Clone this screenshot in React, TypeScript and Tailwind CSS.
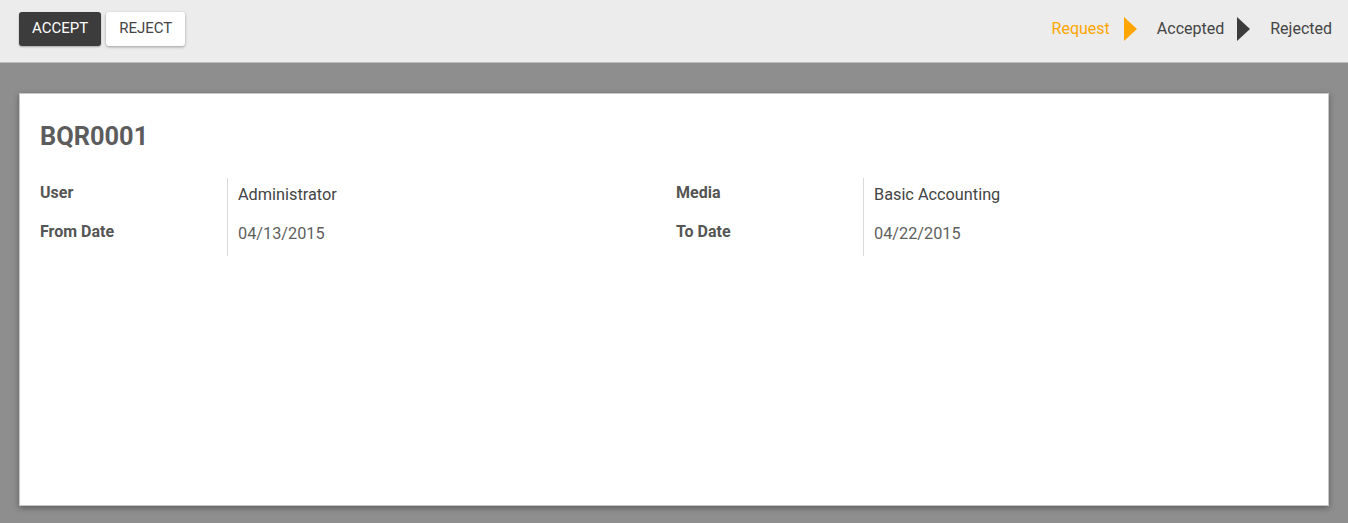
import React from 'react';

const Field = ({ label, value, muted }: { label: string; value: string; muted?: boolean }) => (
  <div className="flex">
    <div className="w-[188px] shrink-0 border-r border-[#d9d9d9] pt-[3px] h-[39px] text-[16px] font-bold text-[#555555]">
      {label}
    </div>
    <div className={`pl-[10px] pt-[5px] h-[39px] text-[16.3px] ${muted ? 'text-[#5f5f5f]' : 'text-[#444444]'}`}>
      {value}
    </div>
  </div>
);

export default function App() {
  return (
    <div className="min-h-[523px] bg-[#8e8e8e] flex flex-col" style={{ fontFamily: 'Roboto, "Noto Sans", sans-serif' }}>
      {/* Control panel */}
      <div className="h-[63px] bg-[#ececec] border-b border-[#bdbdbd] flex items-center justify-between pl-[19px] pr-[16px]">
        <div className="flex gap-[5px] -mt-[5px]">
          <button className="h-[34px] px-[13px] bg-[#3c3c3c] text-white text-[15px] rounded-[3px] shadow-[0_1px_2px_rgba(0,0,0,0.3)]">
            ACCEPT
          </button>
          <button className="h-[34px] px-[13px] bg-white text-[#444] text-[15px] rounded-[3px] shadow-[0_1px_3px_rgba(0,0,0,0.35)]">
            REJECT
          </button>
        </div>
        <div className="flex items-center text-[16px] -mt-[4px]">
          <span className="text-[#ffa500]">Request</span>
          <span className="ml-[14px] mr-[20px] w-0 h-0 border-y-[12px] border-y-transparent border-l-[13px] border-l-[#ffa500]" />
          <span className="text-[#444]">Accepted</span>
          <span className="ml-[13px] mr-[20px] w-0 h-0 border-y-[12px] border-y-transparent border-l-[13px] border-l-[#3c3c3c]" />
          <span className="text-[#444]">Rejected</span>
        </div>
      </div>

      {/* Sheet */}
      <div className="px-[19px] pt-[30px] pb-[17px]">
        <div className="h-[413px] bg-white border border-[#c6c6c6] shadow-[0_2px_6px_rgba(0,0,0,0.35)] px-[20px] pt-[26px]">
          <h1 className="text-[25.4px] font-bold text-[#5c5c5c] leading-[32px]">BQR0001</h1>
          <div className="mt-[26px] grid grid-cols-[636px_1fr]">
            <div>
              <Field label="User" value="Administrator" />
              <Field label="From Date" value="04/13/2015" muted />
            </div>
            <div>
              <Field label="Media" value="Basic Accounting" />
              <Field label="To Date" value="04/22/2015" muted />
            </div>
          </div>
        </div>
      </div>
    </div>
  );
}
